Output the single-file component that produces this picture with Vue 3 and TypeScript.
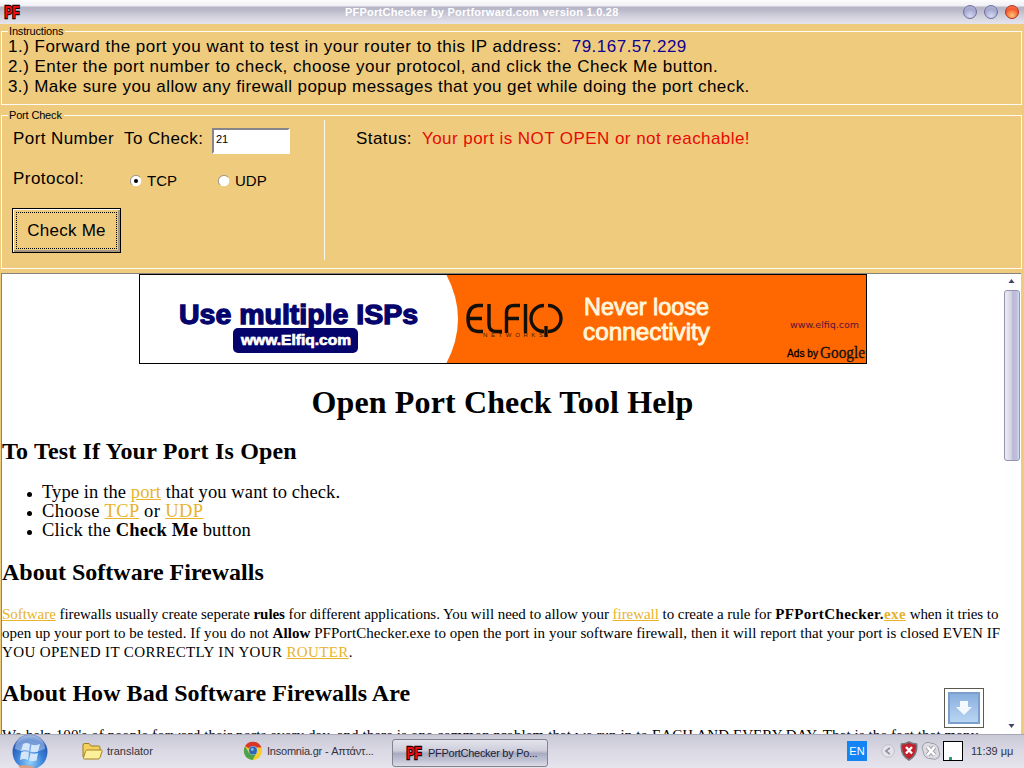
<template>
  <div class="desktop">
    <header class="titlebar">
      <svg class="pf-icon" width="18" height="20" viewBox="0 0 18 20">
        <text class="pf-icon__text" x="1.500" y="16" textLength="15" lengthAdjust="spacingAndGlyphs">PF</text>
      </svg>
      <span class="titlebar__text">PFPortChecker by Portforward.com version 1.0.28</span>
      <div class="titlebar__buttons">
        <span class="orb"></span>
        <span class="orb"></span>
        <span class="orb orb--close"></span>
      </div>
    </header>

    <fieldset class="group group--instructions">
      <legend>Instructions</legend>
      <p class="line">1.) Forward the port you want to test in your router to this IP address:<span class="ip">{{ ipAddress }}</span></p>
      <p class="line">2.) Enter the port number to check, choose your protocol, and click the Check Me button.</p>
      <p class="line line--last">3.) Make sure you allow any firewall popup messages that you get while doing the port check.</p>
    </fieldset>

    <fieldset class="group group--check">
      <legend>Port Check</legend>
      <div class="check">
        <div class="check__form">
          <div class="check__row">
            <label class="check__label">Port Number&nbsp; To Check:</label>
            <input v-model="port" class="port-input" type="text" />
          </div>
          <div class="check__row check__row--protocol">
            <span class="protocol-label">Protocol:</span>
            <label v-for="p in protocols" :key="p" class="radio" @click="protocol = p">
              <svg width="12" height="12" viewBox="0 0 12 12">
                <circle cx="6" cy="6" r="5.3" fill="#fff" />
                <path d="M10 2A5.5 5.5 0 1 0 2 10" fill="none" stroke="#99968f" stroke-width="1" />
                <circle v-if="protocol === p" cx="6" cy="6" r="2" fill="#000" />
              </svg>
              <span>{{ p }}</span>
            </label>
          </div>
          <button class="check-button" type="button"><span>Check Me</span></button>
        </div>
        <div class="check__status">
          <span>Status:</span>
          <span class="status-text">{{ statusText }}</span>
        </div>
      </div>
    </fieldset>

    <main class="browser">
      <article class="page">
        <svg class="banner" width="728" height="90" viewBox="0 0 728 90">
          <rect width="728" height="90" fill="#fff" />
          <path d="M307 0Q331 45 307 90H728V0Z" fill="#ff6700" />
          <text class="banner__heavy" x="40" y="50" font-size="27" textLength="239" lengthAdjust="spacingAndGlyphs" fill="#04046c" stroke="#04046c" stroke-width="1.3">Use multiple ISPs</text>
          <rect x="94" y="54" width="125" height="25" rx="5" fill="#04046c" />
          <text class="banner__heavy" x="102" y="71" font-size="15" textLength="110" lengthAdjust="spacingAndGlyphs" fill="#fff" stroke="#fff" stroke-width=".7">www.Elfiq.com</text>
          <g fill="none" stroke="#141008" stroke-width="3.4">
            <path d="M344 31.500H339Q329 32 329 45Q329 57 339 57.500H344M330 44.500H343" />
            <path d="M350 30V50Q350 57.500 357 57.500H363" />
            <path d="M367.500 59V39Q367.500 31.500 375 31.500H381M368 44.500H380" />
            <path d="M386.500 30V59" />
            <path d="M405 31.500A13 13 0 0 0 405 57.500" />
            <path d="M409 31.500A13 13 0 0 1 409 57.500M407 52V63" />
          </g>
          <text class="banner__sans" x="344" y="63" font-size="6" textLength="60" fill="#3a1c08">NETWORKS</text>
          <text class="banner__narrow" x="445" y="41" font-size="24" textLength="125" lengthAdjust="spacingAndGlyphs" fill="#fff6dc" stroke="#fff6dc" stroke-width=".9">Never loose</text>
          <text class="banner__narrow" x="444" y="66" font-size="24" textLength="127" lengthAdjust="spacingAndGlyphs" fill="#fff6dc" stroke="#fff6dc" stroke-width=".9">connectivity</text>
          <text class="banner__verdana" x="651" y="54" font-size="9.500" textLength="69" lengthAdjust="spacingAndGlyphs" fill="#5c123c">www.elfiq.com</text>
          <text class="banner__sans" x="648" y="83" font-size="11" textLength="31" lengthAdjust="spacingAndGlyphs" fill="#000" stroke="#000" stroke-width=".3">Ads by</text>
          <text class="banner__serif" x="681" y="84" font-size="17" textLength="45" lengthAdjust="spacingAndGlyphs" fill="#111" stroke="#111" stroke-width=".3">Google</text>
          <rect x=".5" y=".5" width="727" height="89" fill="none" stroke="#000" />
        </svg>

        <h1>Open Port Check Tool Help</h1>
        <h2 class="h2--test">To Test If Your Port Is Open</h2>
        <ul>
          <li class="li--type">Type in the <a>port</a> that you want to check.</li>
          <li class="li--choose">Choose <a>TCP</a> or <a>UDP</a></li>
          <li class="li--click">Click the <b>Check Me</b> button</li>
        </ul>
        <h2>About Software Firewalls</h2>
        <p>
          <span class="p-line p-line--1"><a>Software</a> firewalls usually create seperate <b>rules</b> for different applications. You will need to allow your <a>firewall</a> to create a rule for <b class="exe">PFPortChecker.<a>exe</a></b> when it tries to</span>
          <span class="p-line p-line--2">open up your port to be tested. If you do not <b>Allow</b> PFPortChecker.exe to open the port in your software firewall, then it will report that your port is closed EVEN IF</span>
          <span class="p-line p-line--3">YOU OPENED IT CORRECTLY IN YOUR <a>ROUTER</a>.</span>
        </p>
        <h2 class="h2--bad">About How Bad Software Firewalls Are</h2>
        <p>
          <span class="p-line p-line--4">We help 100's of people forward their ports every day, and there is one common problem that we run in to EACH AND EVERY DAY. That is the fact that many</span>
        </p>
      </article>

      <div class="scrollbar">
        <svg width="7" height="4" viewBox="0 0 7 4"><path d="M3.500 0L6.500 4H.5Z" fill="#454466" /></svg>
        <div class="scrollbar__thumb"></div>
        <svg class="scrollbar__down" width="7" height="4" viewBox="0 0 7 4"><path d="M3.500 4L6.500 0H.5Z" fill="#454466" /></svg>
      </div>

      <div class="float-button">
        <svg width="32" height="32" viewBox="0 0 32 32">
          <defs>
            <linearGradient id="down" x1="0" y1="0" x2="0" y2="1">
              <stop offset="0" stop-color="#86aede" />
              <stop offset=".5" stop-color="#a3c2e8" />
              <stop offset="1" stop-color="#b9d6f2" />
            </linearGradient>
          </defs>
          <rect x="1" y="1" width="30" height="30" fill="url(#down)" stroke="#7d9fce" stroke-width="2" />
          <path d="M12 9H20V15H24L16 23L8 15H12Z" fill="#f4f9ff" />
        </svg>
      </div>
    </main>

    <footer class="taskbar">
      <svg class="start" width="36" height="34" viewBox="0 0 36 34">
        <defs>
          <radialGradient id="start" cx=".5" cy=".8" r=".75">
            <stop offset="0" stop-color="#8fd0fa" />
            <stop offset=".5" stop-color="#3c82d8" />
            <stop offset=".85" stop-color="#2859b4" />
            <stop offset="1" stop-color="#6f8fcb" />
          </radialGradient>
        </defs>
        <circle cx="18" cy="18" r="17.500" fill="url(#start)" />
        <path d="M3 15A15 14 0 0 1 33 15Q18 22 3 15Z" fill="#cfe2fa" opacity=".45" />
        <g fill="#d3e6fa">
          <path d="M11 10Q14 8 18 10L17 17Q13 15 9 17Z" />
          <path d="M19.500 10.500Q24 12 28 10L26 17.500Q22 19 18.500 17.500Z" />
          <path d="M9 18.500Q13 16.500 17 18.500L16 26Q12 24 8 26Z" />
          <path d="M18.500 19Q22 20.500 26 19L24.500 26.500Q21 28 17 26.500Z" />
        </g>
        <path d="M6 32Q12 30 23 33L20 34H8Z" fill="#e0a084" />
      </svg>

      <div class="task task--folder">
        <svg width="21" height="18" viewBox="0 0 21 18">
          <path d="M1 15V3Q1 1.500 2.500 1.500H7L9 4H16.500Q18 4 18 5.500V15Z" fill="#f2d15c" stroke="#a37b1a" />
          <path d="M5 8H19.500Q20.500 8 20 9.500L18 15.500Q17.500 17 16 17H2.500Q1 17 1.500 15.500L3.500 9.500Q4 8 5 8Z" fill="#fdf09a" stroke="#a8821f" />
        </svg>
        <span>translator</span>
      </div>

      <div class="task task--chrome">
        <svg width="20" height="20" viewBox="0 0 20 20">
          <circle cx="10" cy="10" r="9" fill="#f6cd2c" />
          <path d="M10 10L2 5A9.300 9.300 0 0 1 18.500 6.500H10Z" fill="#d8372a" />
          <path d="M2 5.200A9.300 9.300 0 0 0 9.500 19L13.500 12L6 12Z" fill="#4ba44a" />
          <circle cx="10" cy="9.500" r="4.600" fill="#a9c4e6" />
          <circle cx="10" cy="9.500" r="3.900" fill="#2f66b4" />
          <circle cx="9.300" cy="8.500" r="1.400" fill="#8fb9ea" />
        </svg>
        <span>Insomnia.gr - Απτάντ...</span>
      </div>

      <div class="task task--active">
        <svg class="pf-icon" width="18" height="20" viewBox="0 0 18 20">
          <text class="pf-icon__text" x="1.500" y="16" textLength="15" lengthAdjust="spacingAndGlyphs">PF</text>
        </svg>
        <span>PFPortChecker by Po...</span>
      </div>

      <div class="tray">
        <span class="lang">EN</span>
        <svg class="tray__arrow" width="14" height="14" viewBox="0 0 14 14">
          <circle cx="7" cy="7" r="6.300" fill="#e4e3ea" stroke="#c0bfcc" />
          <path d="M8.800 3.800L5 7L8.800 10.200" fill="none" stroke="#8b8b99" stroke-width="1.600" />
        </svg>
        <svg class="tray__shield" width="18" height="20" viewBox="0 0 18 20">
          <path d="M9 1Q12.500 3 16.500 3Q18 14 9 19Q0 14 1.500 3Q5.500 3 9 1Z" fill="#c41f2c" stroke="#77757c" stroke-width="1.600" />
          <path d="M6 6L12 12.500M12 6L6 12.500" stroke="#fff" stroke-width="2.400" />
        </svg>
        <svg class="tray__skype" width="20" height="20" viewBox="0 0 20 20">
          <path d="M6 1.500Q8.500 1 10 2.200Q17.500 2.500 17.800 10Q20 13 17.500 16.500Q14.500 19.500 11 17.800Q3 18 2.200 10.500Q.3 7 2 4Q3.500 2 6 1.500Z" fill="#dcdce0" stroke="#9d9da6" />
          <path d="M6.500 6L13.500 14M13.500 6L6.500 14" stroke="#a4a4ac" stroke-width="4.600" />
          <path d="M6.500 6L13.500 14M13.500 6L6.500 14" stroke="#fff" stroke-width="2.600" />
        </svg>
        <svg class="tray__meter" width="20" height="20" viewBox="0 0 20 20">
          <rect x=".5" y=".5" width="19" height="19" fill="#fff" stroke="#000" />
          <rect x="6" y="16" width="3" height="3" fill="#2f9a72" />
        </svg>
        <span class="clock">11:39 μμ</span>
      </div>
    </footer>
  </div>
</template>

<script setup lang="ts">
import { ref } from 'vue'

type Protocol = 'TCP' | 'UDP'

const protocols: Protocol[] = ['TCP', 'UDP']

const ipAddress = ref('79.167.57.229')
const port = ref('21')
const protocol = ref<Protocol>('TCP')
const statusText = ref('Your port is NOT OPEN or not reachable!')
</script>

<style>
body {
  margin: 0;
  overflow: hidden;
}
</style>

<style scoped>
.desktop {
  --sand: #efcb7e;
  --link: #e8b32a;

  width: 1024px;
  height: 768px;
  display: flex;
  flex-direction: column;
  overflow: hidden;
  background: var(--sand);
  color: #000;
  font-family: 'Liberation Sans', Arial, sans-serif;
  white-space: nowrap;
}

.desktop svg {
  display: block;
  flex: none;
}

.titlebar {
  flex: none;
  height: 24px;
  display: flex;
  align-items: center;
  padding: 0 5px 0 3px;
  background: linear-gradient(#fdfdfd 0, #eeeef4 6px, #b5b5c6 7px, #b9b9ca 10px, #d3d3df 17px, #e5e4ee 24px);
}

.titlebar__text {
  margin-left: 324px;
  font-size: 11px;
  font-weight: bold;
  letter-spacing: 0.24px;
  line-height: 24px;
  color: #fff;
}

.titlebar__buttons {
  display: flex;
  gap: 7px;
  margin-left: auto;
}

.orb {
  box-sizing: border-box;
  width: 14px;
  height: 14px;
  border: 1px solid #6e7098;
  border-radius: 50%;
  background: radial-gradient(circle at 50% 85%, #d6daf4, #a3a7cf 60%, #b9bcda);
}

.orb--close {
  border-color: #b2321c;
  background: radial-gradient(circle at 50% 80%, #ffc77a, #f4572c 60%, #f58a66);
}

.pf-icon {
  overflow: visible;
}

.pf-icon__text {
  font-family: 'Liberation Sans', Arial, sans-serif;
  font-size: 17px;
  font-weight: bold;
  fill: #ee1018;
  stroke: #1c0000;
  stroke-width: 2.5px;
  paint-order: stroke;
}

.group {
  box-sizing: border-box;
  flex: none;
  min-width: 0;
  margin: 1px 2px 0 1px;
  padding: 0 5px;
  border: 1px solid #fffaf4;
}

.group legend {
  height: 13px;
  margin-left: 1px;
  padding: 0 2px 0 1px;
  font-size: 11px;
  letter-spacing: -0.17px;
  line-height: 12px;
}

.group--instructions {
  height: 80px;
}

.group--check {
  height: 160px;
  margin-top: 4px;
}

.line {
  position: relative;
  top: -1px;
  margin: 0 0 0 1px;
  font-size: 17px;
  letter-spacing: 0.49px;
  line-height: 20px;
}

.line--last {
  letter-spacing: 0.42px;
}

.ip {
  margin-left: 10px;
  color: #0c0096;
}

.check {
  display: flex;
  height: 140px;
  margin-top: -2px;
}

.check__form {
  box-sizing: border-box;
  width: 318px;
  padding: 7px 0 0 6px;
  border-right: 1px solid #fbf6ee;
  font-size: 17px;
}

.check__row {
  display: flex;
  height: 28px;
  align-items: flex-start;
}

.check__label {
  width: 199px;
  letter-spacing: 0.42px;
  line-height: 24px;
}

.port-input {
  box-sizing: border-box;
  width: 78px;
  height: 26px;
  margin-top: 1px;
  padding: 0 0 5px 2px;
  border: 2px solid;
  border-color: #85858a #fff #fff #85858a;
  border-radius: 0;
  outline: none;
  background: #fff;
  font: 11px 'Liberation Sans', Arial, sans-serif;
}

.check__row--protocol {
  height: 30px;
  margin-top: 14px;
}

.protocol-label {
  width: 117px;
  letter-spacing: 0.45px;
  line-height: 20px;
}

.radio {
  display: flex;
  align-items: center;
  gap: 5px;
  width: 88px;
  margin-top: 3px;
  font-size: 15px;
  line-height: 18px;
}

.check-button {
  display: block;
  box-sizing: border-box;
  width: 109px;
  height: 45px;
  margin: 9px 0 0 -1px;
  padding: 3px;
  border: 1px solid #000;
  border-radius: 0;
  box-shadow: inset 1px 1px #fff, inset -2px -2px #a59681;
  background: var(--sand);
  color: #000;
  font: 17px 'Liberation Sans', Arial, sans-serif;
  letter-spacing: 0.25px;
}

.check-button span {
  display: block;
  box-sizing: border-box;
  width: 101px;
  height: 37px;
  border: 1px dotted #000;
  line-height: 35px;
}

.check__status {
  display: flex;
  gap: 10px;
  padding: 9px 0 0 31px;
  font-size: 17px;
  letter-spacing: 0.44px;
  line-height: 20px;
}

.status-text {
  color: #e60a05;
}

.browser {
  position: relative;
  box-sizing: border-box;
  display: flex;
  flex: 1;
  min-height: 0;
  margin: 4px 3px 0 1px;
  border-top: 1px solid #85837f;
  border-left: 1px solid #85837f;
  background: #fff;
}

.page {
  width: 1001px;
  overflow: hidden;
  font-family: 'Liberation Serif', 'Times New Roman', serif;
}

.banner {
  margin-left: 137px;
}

.banner__heavy {
  font-family: 'Liberation Sans', Arial, sans-serif;
  font-weight: bold;
}

.banner__sans,
.banner__narrow {
  font-family: 'Liberation Sans', Arial, sans-serif;
}

.banner__verdana {
  font-family: 'DejaVu Sans', sans-serif;
}

.banner__serif {
  font-family: 'Liberation Serif', serif;
}

h1,
h2,
ul,
.page p {
  margin: 0;
}

h1 {
  margin-top: 19px;
  font-size: 32px;
  letter-spacing: 0.13px;
  line-height: 38px;
  text-align: center;
}

h2 {
  margin-top: 18px;
  font-size: 24px;
  line-height: 28px;
}

.h2--test {
  margin-top: 16px;
  letter-spacing: 0.18px;
}

.h2--bad {
  margin-top: 17px;
  letter-spacing: 0.06px;
}

ul {
  margin-top: 18px;
  padding-left: 40px;
  font-size: 18.5px;
  line-height: 19px;
  list-style: none;
}

li {
  position: relative;
}

li::before {
  content: '';
  position: absolute;
  top: 9px;
  left: -15px;
  width: 5px;
  height: 5px;
  border-radius: 50%;
  background: #000;
}

.li--type {
  letter-spacing: 0.1px;
}

.li--choose {
  letter-spacing: 0.4px;
}

.li--click {
  letter-spacing: 0.18px;
}

.page p {
  margin-top: 19px;
  font-size: 15px;
  line-height: 19px;
}

.p-line {
  display: block;
}

.p-line--1 {
  letter-spacing: -0.05px;
}

.p-line--2 {
  letter-spacing: 0.05px;
}

.p-line--3 {
  letter-spacing: 0.36px;
}

.p-line--4 {
  letter-spacing: 0.1px;
}

.exe {
  letter-spacing: 0.4px;
}

a {
  color: var(--link);
  text-decoration: underline;
}

.scrollbar {
  display: flex;
  flex: 1;
  flex-direction: column;
  align-items: center;
  padding: 5px 1px 0 0;
  background: #fefefe;
}

.scrollbar__thumb {
  box-sizing: border-box;
  width: 16px;
  height: 171px;
  margin-top: 7px;
  border: 1px solid #9494b2;
  border-radius: 3px;
  background: linear-gradient(90deg, #ededf3, #d3d3e3 45%, #b8b8d8 55%, #c0c0e0 85%, #dcdcec);
}

.scrollbar__down {
  margin: auto 0 6px;
}

.float-button {
  position: absolute;
  right: 37px;
  bottom: 6px;
  box-sizing: border-box;
  width: 40px;
  height: 40px;
  padding: 3px;
  border: 1px solid #5a5a50;
  background: #fff;
}

.taskbar {
  box-sizing: border-box;
  flex: none;
  display: flex;
  align-items: center;
  height: 34px;
  padding-bottom: 1px;
  border-top: 1px solid #a9a8b8;
  background: linear-gradient(#c9c8d6, #dad9e4 50%, #e6e5ee);
  font-size: 11px;
  color: #33333d;
}

.start {
  margin-left: 12px;
}

.task {
  display: flex;
  align-items: center;
  gap: 4px;
}

.task--folder {
  margin-left: 34px;
  width: 161px;
}

.task--chrome {
  width: 149px;
  letter-spacing: -0.22px;
}

.task--active {
  box-sizing: border-box;
  width: 156px;
  height: 28px;
  margin-top: 3px;
  padding-left: 12px;
  border: 1px solid #83838f;
  border-radius: 3px;
  background: linear-gradient(#e3e3ec, #cfcfdc 40%, #a9abc2 52%, #bec0d2 75%, #dcdce6);
  color: #22223a;
  gap: 5px;
  letter-spacing: -0.28px;
}

.tray {
  display: flex;
  align-items: center;
  margin-left: auto;
  padding-right: 11px;
}

.lang {
  width: 20px;
  height: 20px;
  background: #1484f4;
  color: #fff;
  font-size: 11px;
  line-height: 20px;
  text-align: center;
}

.tray__arrow {
  margin-left: 14px;
}

.tray__shield {
  margin-left: 5px;
}

.tray__skype {
  margin-left: 3px;
}

.tray__meter {
  margin-left: 2px;
}

.clock {
  width: 42px;
  margin-left: 8px;
}
</style>
